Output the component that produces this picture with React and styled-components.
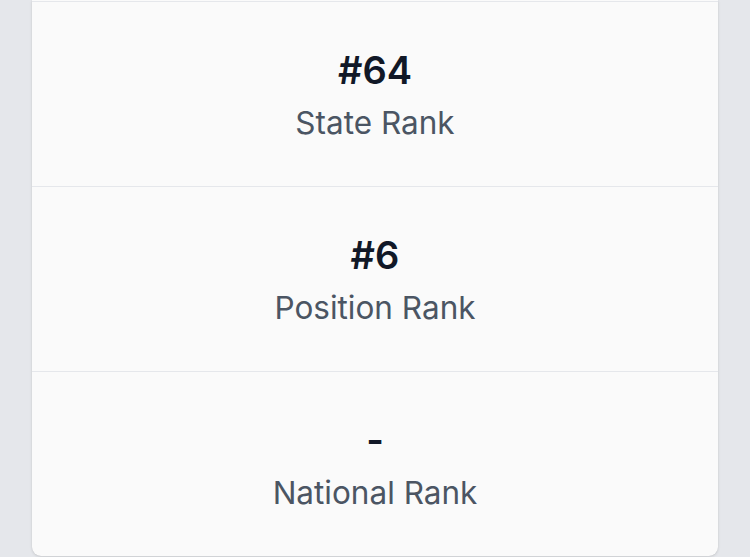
import React from "react";
import styled, { createGlobalStyle } from "styled-components";

const Global = createGlobalStyle`
  html, body { margin: 0; padding: 0; background: #e5e7eb; }
  body { font-family: Inter, "Noto Sans", "Liberation Sans", sans-serif; }
`;

const Page = styled.div`
  box-sizing: border-box;
  width: 750px;
  height: 557px;
  padding: 0 32px;
  overflow: hidden;
`;

const Card = styled.div`
  background: #fafafa;
  border-radius: 0 0 9px 9px;
  box-shadow: 0 1px 3px rgba(0, 0, 0, 0.12), 0 0 1px rgba(0, 0, 0, 0.1);
  padding-top: 1px;
  display: flex;
  flex-direction: column;
`;

const Stat = styled.div`
  height: 185px;
  box-sizing: border-box;
  border-top: 1px solid #e5e7eb;
  padding-top: 3px;
  display: flex;
  flex-direction: column;
  align-items: center;
  justify-content: center;
`;

const Value = styled.div`
  font-size: 38px;
  line-height: 40px;
  font-weight: 600;
  color: #111827;
`;

const Label = styled.div`
  margin-top: 15px;
  font-size: 31.5px;
  line-height: 36px;
  color: #4b5563;
`;

const stats = [
  { value: "#64", label: "State Rank" },
  { value: "#6", label: "Position Rank" },
  { value: "-", label: "National Rank" },
];

export default function App() {
  return (
    <>
      <Global />
      <Page>
        <Card>
          {stats.map((s) => (
            <Stat key={s.label}>
              <Value>{s.value}</Value>
              <Label>{s.label}</Label>
            </Stat>
          ))}
        </Card>
      </Page>
    </>
  );
}
